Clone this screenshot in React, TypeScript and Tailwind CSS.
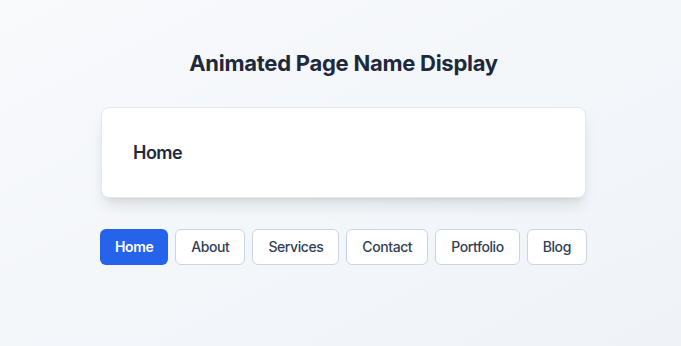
import { useState } from "react";

const pages = ["Home", "About", "Services", "Contact", "Portfolio", "Blog"];

export default function App() {
  const [current, setCurrent] = useState("Home");

  return (
    <main
      className="min-h-screen bg-gradient-to-br from-[#f8fafc] to-[#eff3f8] pt-[48px] pl-[6px]"
      style={{ fontFamily: "Inter, 'Noto Sans', sans-serif" }}
    >
      <div className="w-[485px] mx-auto">
        <h1 className="text-[22px] leading-[30px] font-bold text-[#1e293b] text-center tracking-[-0.012em]">
          Animated Page Name Display
        </h1>

        <div className="mt-[29px] bg-white rounded-lg border border-[#e2e8f0] shadow-lg px-[31px] py-8">
          <h2 className="text-lg font-semibold text-[#1e293b] leading-[25px] tracking-[-0.03em]">{current}</h2>
        </div>

        <nav className="mt-[31px] flex justify-center gap-[7px]">
          {pages.map((p) => (
            <button
              key={p}
              onClick={() => setCurrent(p)}
              className={
                p === current
                  ? "h-9 px-[15px] rounded-md text-sm font-semibold tracking-[-0.03em] bg-[#2563eb] text-white"
                  : "h-9 px-[15px] rounded-md text-sm font-medium tracking-[-0.03em] bg-white text-[#334155] border border-[#cbd5e1]"
              }
            >
              {p}
            </button>
          ))}
        </nav>
      </div>
    </main>
  );
}
